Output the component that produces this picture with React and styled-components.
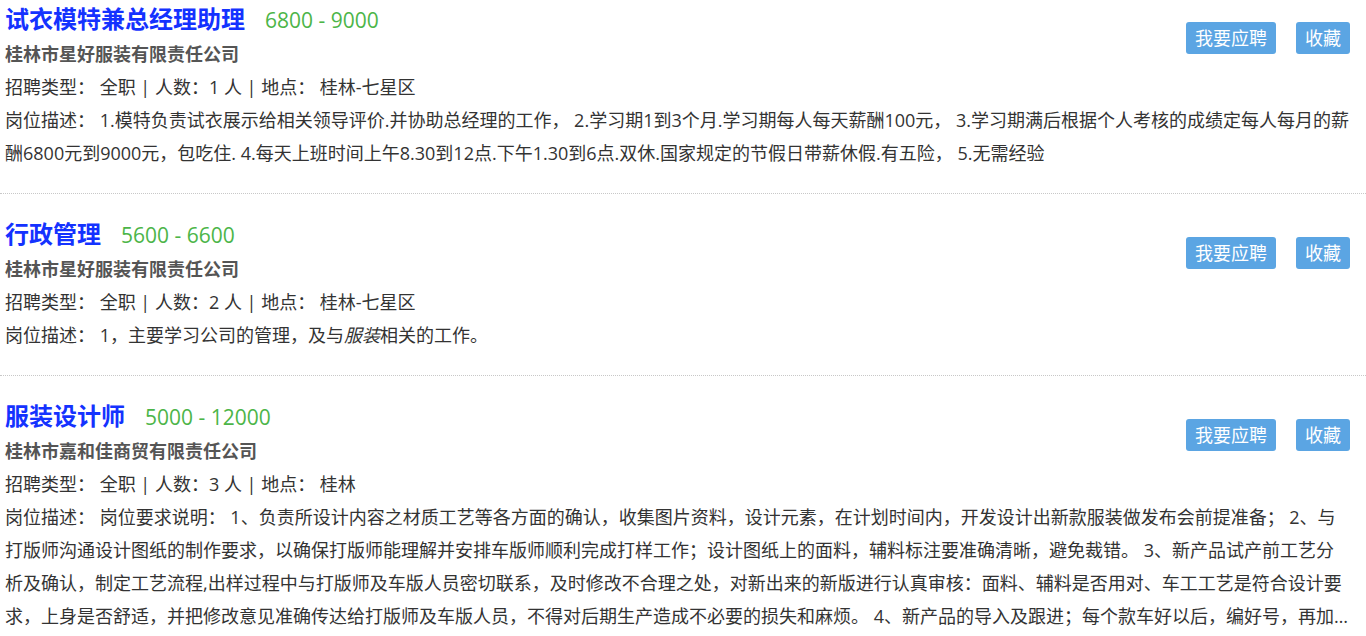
import React from "react";
import styled, { createGlobalStyle } from "styled-components";

const GlobalStyle = createGlobalStyle`
  body {
    margin: 0;
    background: #fff;
    font-family: "Open Sans", "Noto Sans CJK SC", sans-serif;
    color: #333;
  }
`;

const jobs = [
  {
    title: "试衣模特兼总经理助理",
    salary: "6800 - 9000",
    company: "桂林市星好服装有限责任公司",
    count: 1,
    place: "桂林-七星区",
    desc: "1.模特负责试衣展示给相关领导评价.并协助总经理的工作， 2.学习期1到3个月.学习期每人每天薪酬100元， 3.学习期满后根据个人考核的成绩定每人每月的薪酬6800元到9000元，包吃住. 4.每天上班时间上午8.30到12点.下午1.30到6点.双休.国家规定的节假日带薪休假.有五险， 5.无需经验",
  },
  {
    title: "行政管理",
    salary: "5600 - 6600",
    company: "桂林市星好服装有限责任公司",
    count: 2,
    place: "桂林-七星区",
    desc: (
      <>
        1，主要学习公司的管理，及与<em>服装</em>相关的工作。
      </>
    ),
  },
  {
    title: "服装设计师",
    salary: "5000 - 12000",
    company: "桂林市嘉和佳商贸有限责任公司",
    count: 3,
    place: "桂林",
    desc: "岗位要求说明： 1、负责所设计内容之材质工艺等各方面的确认，收集图片资料，设计元素，在计划时间内，开发设计出新款服装做发布会前提准备； 2、与打版师沟通设计图纸的制作要求，以确保打版师能理解并安排车版师顺利完成打样工作；设计图纸上的面料，辅料标注要准确清晰，避免裁错。 3、新产品试产前工艺分析及确认，制定工艺流程,出样过程中与打版师及车版人员密切联系，及时修改不合理之处，对新出来的新版进行认真审核：面料、辅料是否用对、车工工艺是符合设计要求，上身是否舒适，并把修改意见准确传达给打版师及车版人员，不得对后期生产造成不必要的损失和麻烦。 4、新产品的导入及跟进；每个款车好以后，编好号，再加上吊牌及洗水唛，做好记录交给仓库。 5、完成上级交办的其他工作。",
  },
];

const List = styled.div`
  width: 100%;
`;

const Item = styled.div`
  padding: 22px 16px 23px 5px;
  border-bottom: 1px dotted #c8c8c8;

  &:first-child {
    padding-top: 1px;
  }
`;

const Header = styled.div`
  display: flex;
  justify-content: space-between;
  align-items: flex-start;
`;

const TitleRow = styled.div`
  display: flex;
  align-items: baseline;
  gap: 20px;
  line-height: 36px;
`;

const Title = styled.a`
  font-size: 24px;
  font-weight: 700;
  color: #1432ff;
  text-decoration: none;
`;

const Salary = styled.span`
  font-size: 21px;
  color: #4cb548;
`;

const Company = styled.div`
  font-size: 18px;
  font-weight: 700;
  color: #555;
  line-height: 33px;
`;

const Line = styled.div`
  font-size: 18px;
  line-height: 33px;
  color: #333;
`;

const Desc = styled(Line)`
  display: -webkit-box;
  -webkit-box-orient: vertical;
  -webkit-line-clamp: 4;
  overflow: hidden;
`;

const Actions = styled.div`
  display: flex;
  gap: 20px;
  margin-top: 21px;
`;

const Button = styled.button`
  height: 32px;
  padding: 0 9px;
  border: none;
  border-radius: 3px;
  background: #5ba5e3;
  color: #fff;
  font-family: inherit;
  font-size: 18px;
  line-height: 32px;
  cursor: pointer;
`;

const Job = ({ job }) => (
  <Item>
    <Header>
      <div>
        <TitleRow>
          <Title href="#">{job.title}</Title>
          <Salary>{job.salary}</Salary>
        </TitleRow>
        <Company>{job.company}</Company>
      </div>
      <Actions>
        <Button>我要应聘</Button>
        <Button>收藏</Button>
      </Actions>
    </Header>
    <Line>
      招聘类型： 全职 | 人数：{job.count} 人 | 地点： {job.place}
    </Line>
    <Desc>岗位描述： {job.desc}</Desc>
  </Item>
);

export default function App() {
  return (
    <>
      <GlobalStyle />
      <List>
        {jobs.map((job) => (
          <Job key={job.title} job={job} />
        ))}
      </List>
    </>
  );
}
